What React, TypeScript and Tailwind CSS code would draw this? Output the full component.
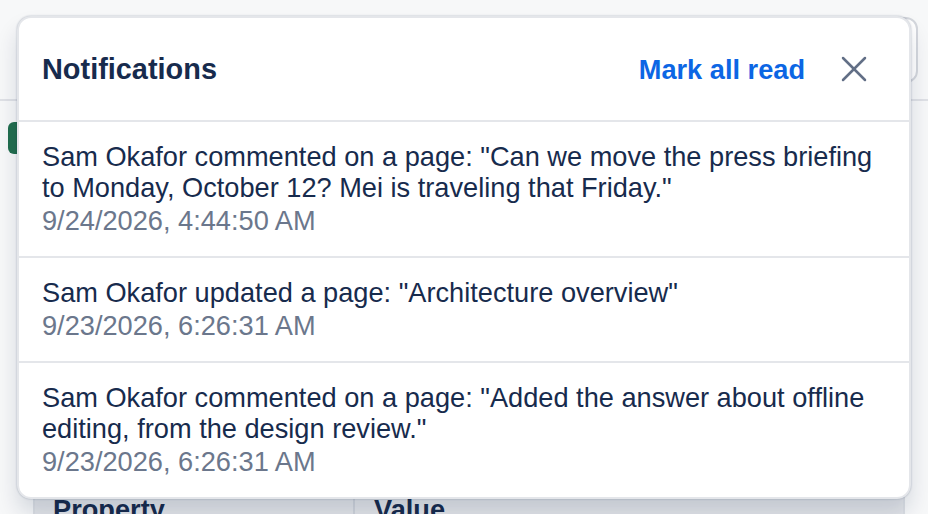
const NOTIFICATIONS = [
  {
    id: 1,
    text: 'Sam Okafor commented on a page: "Can we move the press briefing to Monday, October 12? Mei is traveling that Friday."',
    time: '9/24/2026, 4:44:50 AM',
  },
  {
    id: 2,
    text: 'Sam Okafor updated a page: "Architecture overview"',
    time: '9/23/2026, 6:26:31 AM',
  },
  {
    id: 3,
    text: 'Sam Okafor commented on a page: "Added the answer about offline editing, from the design review."',
    time: '9/23/2026, 6:26:31 AM',
  },
];

function CloseIcon() {
  return (
    <svg width="26" height="26" viewBox="0 0 26 26" fill="none" stroke="#626f86" strokeWidth="2.5" strokeLinecap="round">
      <path d="M2 2 L24 24" />
      <path d="M24 2 L2 24" />
    </svg>
  );
}

export default function App() {
  return (
    <div
      className="relative w-[928px] h-[514px] overflow-hidden bg-[#f7f8f9] text-[#172b4d]"
      style={{ fontFamily: '"Liberation Sans", Arial, sans-serif' }}
    >
      {/* page behind the popover */}
      <div className="h-[101px] border-b-2 border-[#dfe1e6] flex justify-end items-start pt-[17px] pr-[10px]">
        <div className="w-[180px] h-[66px] rounded-[12px] border-2 border-[#d4d7dd] bg-white" />
      </div>
      <div className="pl-[8px] pt-[21px]">
        <div className="w-[90px] h-[32px] rounded-[6px] bg-[#216e4e]" />
      </div>
      <div className="absolute left-[33px] right-[23px] top-[478px] h-[80px] border-2 border-[#dcdfe4] bg-[#e3e5e9] flex">
        <div className="w-[320px] border-r-2 border-[#d0d4db] pl-[18px] pt-[10px] text-[27.2px] font-bold">Property</div>
        <div className="flex-1 pl-[19px] pt-[10px] text-[27.2px] font-bold">Value</div>
      </div>

      {/* notifications popover */}
      <div className="absolute left-[17px] top-[16px] w-[894px] bg-white border-2 border-[#e4e6ea] rounded-[14px] shadow-[0_14px_22px_rgba(9,30,66,0.14),0_0_2px_rgba(9,30,66,0.3)] overflow-hidden">
        <div className="h-[104px] flex items-center justify-between pl-[23px] pr-[42px] border-b-2 border-[#e4e6ea]">
          <div className="text-[28.9px] font-bold leading-none text-[#172b4d]">Notifications</div>
          <div className="flex items-center gap-[36px] pt-[1px]">
            <button className="text-[27.2px] font-bold leading-none text-[#0c66e4]">Mark all read</button>
            <button className="flex items-center justify-center">
              <CloseIcon />
            </button>
          </div>
        </div>
        {NOTIFICATIONS.map((n, i) => (
          <div
            key={n.id}
            className={`px-[23px] pt-[20px] pb-[19px] ${i < NOTIFICATIONS.length - 1 ? 'border-b-2 border-[#e4e6ea]' : ''}`}
          >
            <div className="text-[27.2px] leading-[30.6px] text-[#172b4d]">{n.text}</div>
            <div className="mt-[3px] text-[27.2px] leading-[30.6px] text-[#6b778c]">{n.time}</div>
          </div>
        ))}
      </div>
    </div>
  );
}
